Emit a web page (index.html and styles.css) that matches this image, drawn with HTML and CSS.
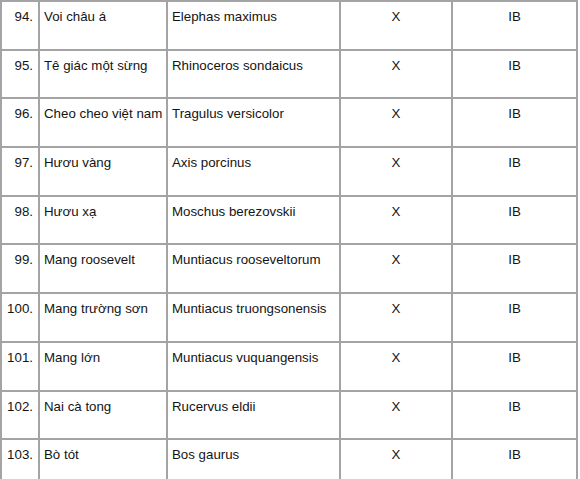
FILE: index.html
```html
<!DOCTYPE html>
<html lang="vi">
<head>
<meta charset="utf-8">
<title>Danh sách loài</title>
<link rel="stylesheet" href="styles.css">
</head>
<body>
<table class="species">
  <colgroup>
    <col class="c-no"><col class="c-vn"><col class="c-sci"><col class="c-x"><col class="c-grp">
  </colgroup>
  <tbody>
    <tr><td class="no">94.</td><td>Voi châu á</td><td>Elephas maximus</td><td class="mid">X</td><td class="mid">IB</td></tr>
    <tr><td class="no">95.</td><td>Tê giác một sừng</td><td>Rhinoceros sondaicus</td><td class="mid">X</td><td class="mid">IB</td></tr>
    <tr><td class="no">96.</td><td>Cheo cheo việt nam</td><td>Tragulus versicolor</td><td class="mid">X</td><td class="mid">IB</td></tr>
    <tr><td class="no">97.</td><td>Hươu vàng</td><td>Axis porcinus</td><td class="mid">X</td><td class="mid">IB</td></tr>
    <tr><td class="no">98.</td><td>Hươu xạ</td><td>Moschus berezovskii</td><td class="mid">X</td><td class="mid">IB</td></tr>
    <tr><td class="no">99.</td><td>Mang roosevelt</td><td>Muntiacus rooseveltorum</td><td class="mid">X</td><td class="mid">IB</td></tr>
    <tr><td class="no">100.</td><td>Mang trường sơn</td><td>Muntiacus truongsonensis</td><td class="mid">X</td><td class="mid">IB</td></tr>
    <tr><td class="no">101.</td><td>Mang lớn</td><td>Muntiacus vuquangensis</td><td class="mid">X</td><td class="mid">IB</td></tr>
    <tr><td class="no">102.</td><td>Nai cà tong</td><td>Rucervus eldii</td><td class="mid">X</td><td class="mid">IB</td></tr>
    <tr><td class="no">103.</td><td>Bò tót</td><td>Bos gaurus</td><td class="mid">X</td><td class="mid">IB</td></tr>
  </tbody>
</table>
</body>
</html>
```
FILE: styles.css
```css
html, body {
  margin: 0;
  padding: 0;
  background: #ffffff;
  overflow: hidden;
}
.species {
  border-collapse: collapse;
  table-layout: fixed;
  width: 578px;
  font-family: "Liberation Sans", Arial, sans-serif;
  font-size: 13.3px;
  color: #141414;
}
.c-no { width: 38px; }
.c-vn { width: 128px; }
.c-sci { width: 173px; }
.c-x { width: 112px; }
.c-grp { width: 125px; }
.species tr {
  height: 48.7px;
}
.species td {
  border: 2px solid #a4a4a4;
  padding: 7px 4px 0 4px;
  vertical-align: top;
  white-space: nowrap;
  line-height: 15px;
}
.species td.no {
  text-align: right;
  padding-right: 5px;
  padding-left: 0;
}
.species td.mid {
  text-align: center;
  padding-left: 0;
  padding-right: 0;
}
```
